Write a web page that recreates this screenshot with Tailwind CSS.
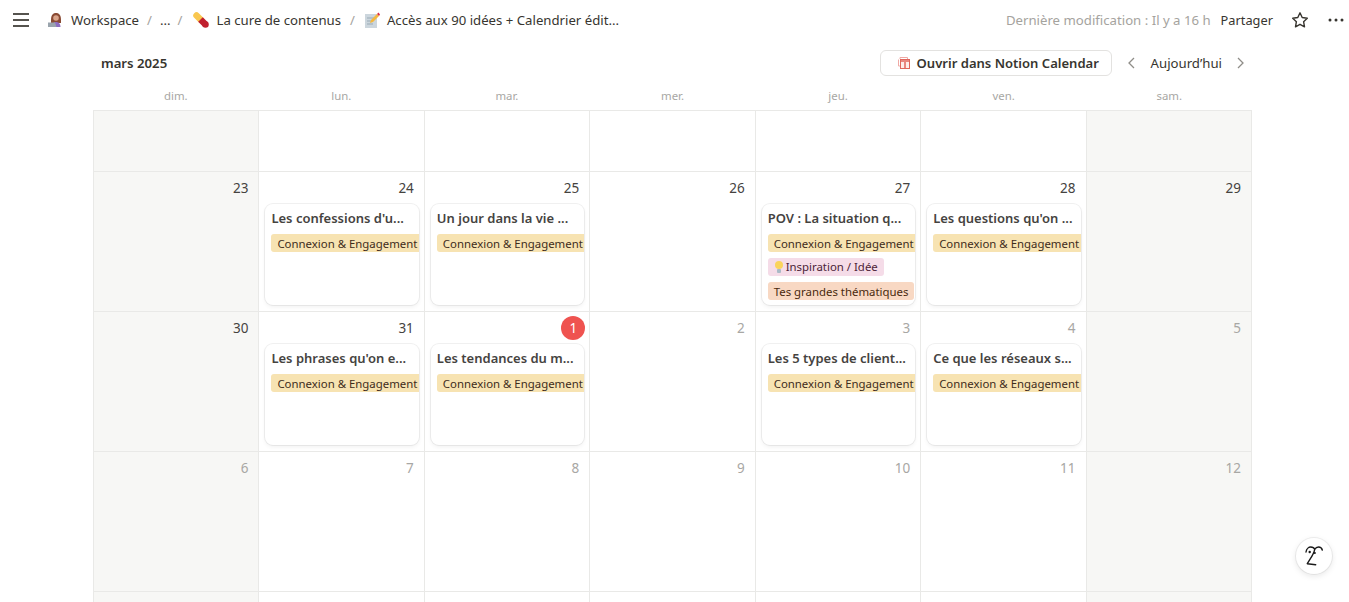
<!DOCTYPE html>
<html lang="fr"><head><meta charset="utf-8"><title>Calendrier</title>
<script src="https://cdn.jsdelivr.net/npm/@tailwindcss/browser@4"></script></head>
<body class="bg-white overflow-hidden">
<div class="relative w-[1349px] h-[602px] overflow-hidden bg-white text-[#37352f] font-['Noto_Sans','Open_Sans',sans-serif] text-[13.2px]">
  <header class="h-[40px] flex items-center pl-[13px] pr-[5px]">
    <svg class="w-[16px] h-[14px] mr-[19px] shrink-0" viewBox="0 0 16 14"><path d="M0 1h16M0 7h16M0 13h16" stroke="#55534e" stroke-width="2"/></svg>
    <svg class="w-[16px] h-[16px] mr-[7px] shrink-0" viewBox="0 0 16 16"><path d="M3 8C3 2.500 5.500 1 8 1s5 1.500 5 7v3H3z" fill="#8a4b34"/><circle cx="8" cy="6" r="2.800" fill="#d9a48a"/><path d="M4 15c0-4 2-5 4-5s4.500 1 4.500 5z" fill="#8e6cc0"/><path d="M0 10.500h7l1.500 4.500H0z" fill="#9aa4ad"/></svg>
    <span class="pt-[2px]">Workspace</span><span class="pt-[2px] ml-[8px] mr-[8px] text-[#a5a39e]">/</span><span class="pt-[2px]">...</span><span class="pt-[2px] ml-[7px] mr-[11px] text-[#a5a39e]">/</span>
    <svg class="w-[16px] h-[16px] mr-[7px] shrink-0" viewBox="0 0 16 16"><path d="M3.500 3.500L8 8" stroke="#f9c74f" stroke-width="6.500" stroke-linecap="round"/><path d="M7.500 7.500L12.500 12.500" stroke="#c0202f" stroke-width="6.500"/><circle cx="12.500" cy="12.500" r="3.250" fill="#c0202f"/></svg>
    <span class="pt-[2px]">La cure de contenus</span><span class="pt-[2px] ml-[9px] mr-[9px] text-[#a5a39e]">/</span>
    <svg class="w-[16px] h-[16px] mr-[7px] shrink-0" viewBox="0 0 16 16"><rect x="1" y="2" width="12" height="14" fill="#ccd6dd"/><path d="M3 6h8M3 9h5M3 12h6" stroke="#99aab5"/><path d="M6 11l1-3 6-6 2 2-6 6z" fill="#f4b83f"/><path d="M13 2l1.500-1.500 1.500 2L15 4z" fill="#dd2e44"/></svg>
    <span class="pt-[2px]">Accès aux 90 idées + Calendrier édit...</span>
    <span class="pt-[2px] ml-auto text-[#a5a39e]">Dernière modification : Il y a 16 h</span>
    <span class="pt-[2px] ml-[10px] text-[12.800px]">Partager</span>
    <svg class="w-[18px] h-[18px] ml-[18px] shrink-0" viewBox="0 0 18 18"><path d="M9 1.800l2.200 4.700 5.100.7-3.700 3.500.9 5.100L9 13.300l-4.500 2.500.9-5.100-3.700-3.500 5.100-.7z" fill="none" stroke="#37352f" stroke-width="1.400" stroke-linejoin="round"/></svg>
    <svg class="w-[16px] h-[4px] ml-[19px] shrink-0" viewBox="0 0 16 4"><circle cx="2" cy="2" r="1.500" fill="#37352f"/><circle cx="8" cy="2" r="1.500" fill="#37352f"/><circle cx="14" cy="2" r="1.500" fill="#37352f"/></svg>
  </header>

  <div class="ml-[93px] w-[1159px]">
    <div class="h-[46px] flex items-center pl-[8px]">
      <span class="pt-[2px] font-semibold">mars 2025</span>
      <button class="ml-auto h-[26px] w-[232px] shrink-0 border border-[#e3e2e0] rounded-[6px] flex items-center pl-[17px] font-semibold whitespace-nowrap">
        <svg class="w-[12px] h-[12px] mr-[7px] shrink-0" viewBox="0 0 12 12"><path d="M2 2V.5H9.500V2M.5 2.500V9H2" fill="none" stroke="#f0aaa5"/><rect x="2.500" y="2.500" width="9" height="9" fill="#fdeceb" stroke="#e0665d"/><path d="M2.500 4h9" stroke="#e0665d" stroke-width="1.500"/><path d="M7 5v6" stroke="#e0665d" stroke-width="1.500"/></svg>
        <span class="pt-[2px] text-[13.050px]">Ouvrir dans Notion Calendar</span>
      </button>
      <svg class="w-[8px] h-[12px] ml-[15px] shrink-0" viewBox="0 0 8 12"><path d="M7 1L2 6l5 5" fill="none" stroke="#8f8d88" stroke-width="1.300"/></svg>
      <span class="pt-[2px] ml-[16px]">Aujourd’hui</span>
      <svg class="w-[8px] h-[12px] ml-[15px] mr-[7px] shrink-0" viewBox="0 0 8 12"><path d="M1 1l5 5-5 5" fill="none" stroke="#8f8d88" stroke-width="1.300"/></svg>
    </div>
    <div class="grid grid-cols-7 h-[24px] pt-[1px] text-[11.400px] text-[#a8a7a4] text-center">
      <div>dim.</div><div>lun.</div><div>mar.</div><div>mer.</div><div>jeu.</div><div>ven.</div><div>sam.</div>
    </div>
    <div class="grid grid-cols-7 grid-rows-[61px_140px_140px_140px_140px] border-l border-t border-[#e9e9e7] text-[13.500px] text-[#45433f]">
      <!-- row 0 -->
      <div class="border-r border-b border-[#e9e9e7] bg-[#f7f7f5]"></div>
      <div class="border-r border-b border-[#e9e9e7]"></div>
      <div class="border-r border-b border-[#e9e9e7]"></div>
      <div class="border-r border-b border-[#e9e9e7]"></div>
      <div class="border-r border-b border-[#e9e9e7]"></div>
      <div class="border-r border-b border-[#e9e9e7]"></div>
      <div class="border-r border-b border-[#e9e9e7] bg-[#f7f7f5]"></div>
      <!-- row 1 -->
      <div class="border-r border-b border-[#e9e9e7] bg-[#f7f7f5] pt-[4px]"><div class="h-[24px] leading-[24px] text-right pr-[10px]">23</div></div>
      <div class="border-r border-b border-[#e9e9e7] pt-[4px]"><div class="h-[24px] leading-[24px] text-right pr-[10px]">24</div>
        <div class="mt-[4px] ml-[6px] mr-[5px] h-[101px] rounded-[8px] bg-white shadow-[0_0_0_1px_rgba(15,15,15,0.06),0_2px_4px_rgba(15,15,15,0.06)] overflow-hidden pl-[6px] pt-[4px]">
          <div class="h-[20px] leading-[20px] text-[13px] font-semibold whitespace-nowrap">Les confessions d'u...</div>
          <div class="mt-[6px] flex flex-col items-start gap-[6px]"><span class="h-[18px] leading-[20px] px-[6px] rounded-[3px] bg-[#f7e3b2] text-[#402c1b] text-[11.400px] whitespace-nowrap">Connexion &amp; Engagement</span></div>
        </div>
      </div>
      <div class="border-r border-b border-[#e9e9e7] pt-[4px]"><div class="h-[24px] leading-[24px] text-right pr-[10px]">25</div>
        <div class="mt-[4px] ml-[6px] mr-[5px] h-[101px] rounded-[8px] bg-white shadow-[0_0_0_1px_rgba(15,15,15,0.06),0_2px_4px_rgba(15,15,15,0.06)] overflow-hidden pl-[6px] pt-[4px]">
          <div class="h-[20px] leading-[20px] text-[13px] font-semibold whitespace-nowrap">Un jour dans la vie ...</div>
          <div class="mt-[6px] flex flex-col items-start gap-[6px]"><span class="h-[18px] leading-[20px] px-[6px] rounded-[3px] bg-[#f7e3b2] text-[#402c1b] text-[11.400px] whitespace-nowrap">Connexion &amp; Engagement</span></div>
        </div>
      </div>
      <div class="border-r border-b border-[#e9e9e7] pt-[4px]"><div class="h-[24px] leading-[24px] text-right pr-[10px]">26</div></div>
      <div class="border-r border-b border-[#e9e9e7] pt-[4px]"><div class="h-[24px] leading-[24px] text-right pr-[10px]">27</div>
        <div class="mt-[4px] ml-[6px] mr-[5px] h-[101px] rounded-[8px] bg-white shadow-[0_0_0_1px_rgba(15,15,15,0.06),0_2px_4px_rgba(15,15,15,0.06)] overflow-hidden pl-[6px] pt-[4px]">
          <div class="h-[20px] leading-[20px] text-[13px] font-semibold whitespace-nowrap">POV : La situation q...</div>
          <div class="mt-[6px] flex flex-col items-start gap-[6px]">
            <span class="h-[18px] leading-[20px] px-[6px] rounded-[3px] bg-[#f7e3b2] text-[#402c1b] text-[11.400px] whitespace-nowrap">Connexion &amp; Engagement</span>
            <span class="h-[18px] leading-[20px] pl-[6px] pr-[6px] rounded-[3px] bg-[#f5dce8] text-[#4c2337] text-[11.400px] whitespace-nowrap flex items-center"><svg class="w-[10px] h-[12px] mr-[2px] shrink-0" viewBox="0 0 10 12"><circle cx="5" cy="4" r="4" fill="#fad45c"/><rect x="3" y="8" width="4" height="4" rx="1" fill="#a9bac6"/></svg>Inspiration / Idée</span>
            <span class="h-[18px] leading-[20px] px-[6px] rounded-[3px] bg-[#f8d8c3] text-[#49290e] text-[11.400px] whitespace-nowrap">Tes grandes thématiques</span>
          </div>
        </div>
      </div>
      <div class="border-r border-b border-[#e9e9e7] pt-[4px]"><div class="h-[24px] leading-[24px] text-right pr-[10px]">28</div>
        <div class="mt-[4px] ml-[6px] mr-[5px] h-[101px] rounded-[8px] bg-white shadow-[0_0_0_1px_rgba(15,15,15,0.06),0_2px_4px_rgba(15,15,15,0.06)] overflow-hidden pl-[6px] pt-[4px]">
          <div class="h-[20px] leading-[20px] text-[13px] font-semibold whitespace-nowrap">Les questions qu'on ...</div>
          <div class="mt-[6px] flex flex-col items-start gap-[6px]"><span class="h-[18px] leading-[20px] px-[6px] rounded-[3px] bg-[#f7e3b2] text-[#402c1b] text-[11.400px] whitespace-nowrap">Connexion &amp; Engagement</span></div>
        </div>
      </div>
      <div class="border-r border-b border-[#e9e9e7] bg-[#f7f7f5] pt-[4px]"><div class="h-[24px] leading-[24px] text-right pr-[10px]">29</div></div>
      <!-- row 2 -->
      <div class="border-r border-b border-[#e9e9e7] bg-[#f7f7f5] pt-[4px]"><div class="h-[24px] leading-[24px] text-right pr-[10px]">30</div></div>
      <div class="border-r border-b border-[#e9e9e7] pt-[4px]"><div class="h-[24px] leading-[24px] text-right pr-[10px]">31</div>
        <div class="mt-[4px] ml-[6px] mr-[5px] h-[101px] rounded-[8px] bg-white shadow-[0_0_0_1px_rgba(15,15,15,0.06),0_2px_4px_rgba(15,15,15,0.06)] overflow-hidden pl-[6px] pt-[4px]">
          <div class="h-[20px] leading-[20px] text-[13px] font-semibold whitespace-nowrap">Les phrases qu'on e...</div>
          <div class="mt-[6px] flex flex-col items-start gap-[6px]"><span class="h-[18px] leading-[20px] px-[6px] rounded-[3px] bg-[#f7e3b2] text-[#402c1b] text-[11.400px] whitespace-nowrap">Connexion &amp; Engagement</span></div>
        </div>
      </div>
      <div class="border-r border-b border-[#e9e9e7] pt-[4px]"><div class="h-[24px] flex justify-end pr-[4px]"><span class="w-[24px] h-[24px] leading-[24px] rounded-full bg-[#ef5350] text-white text-center">1</span></div>
        <div class="mt-[4px] ml-[6px] mr-[5px] h-[101px] rounded-[8px] bg-white shadow-[0_0_0_1px_rgba(15,15,15,0.06),0_2px_4px_rgba(15,15,15,0.06)] overflow-hidden pl-[6px] pt-[4px]">
          <div class="h-[20px] leading-[20px] text-[13px] font-semibold whitespace-nowrap">Les tendances du m...</div>
          <div class="mt-[6px] flex flex-col items-start gap-[6px]"><span class="h-[18px] leading-[20px] px-[6px] rounded-[3px] bg-[#f7e3b2] text-[#402c1b] text-[11.400px] whitespace-nowrap">Connexion &amp; Engagement</span></div>
        </div>
      </div>
      <div class="border-r border-b border-[#e9e9e7] pt-[4px] text-[#a8a7a4]"><div class="h-[24px] leading-[24px] text-right pr-[10px]">2</div></div>
      <div class="border-r border-b border-[#e9e9e7] pt-[4px]"><div class="h-[24px] leading-[24px] text-right pr-[10px] text-[#a8a7a4]">3</div>
        <div class="mt-[4px] ml-[6px] mr-[5px] h-[101px] rounded-[8px] bg-white shadow-[0_0_0_1px_rgba(15,15,15,0.06),0_2px_4px_rgba(15,15,15,0.06)] overflow-hidden pl-[6px] pt-[4px]">
          <div class="h-[20px] leading-[20px] text-[13px] font-semibold whitespace-nowrap">Les 5 types de client...</div>
          <div class="mt-[6px] flex flex-col items-start gap-[6px]"><span class="h-[18px] leading-[20px] px-[6px] rounded-[3px] bg-[#f7e3b2] text-[#402c1b] text-[11.400px] whitespace-nowrap">Connexion &amp; Engagement</span></div>
        </div>
      </div>
      <div class="border-r border-b border-[#e9e9e7] pt-[4px]"><div class="h-[24px] leading-[24px] text-right pr-[10px] text-[#a8a7a4]">4</div>
        <div class="mt-[4px] ml-[6px] mr-[5px] h-[101px] rounded-[8px] bg-white shadow-[0_0_0_1px_rgba(15,15,15,0.06),0_2px_4px_rgba(15,15,15,0.06)] overflow-hidden pl-[6px] pt-[4px]">
          <div class="h-[20px] leading-[20px] text-[13px] font-semibold whitespace-nowrap">Ce que les réseaux s...</div>
          <div class="mt-[6px] flex flex-col items-start gap-[6px]"><span class="h-[18px] leading-[20px] px-[6px] rounded-[3px] bg-[#f7e3b2] text-[#402c1b] text-[11.400px] whitespace-nowrap">Connexion &amp; Engagement</span></div>
        </div>
      </div>
      <div class="border-r border-b border-[#e9e9e7] bg-[#f7f7f5] pt-[4px] text-[#a8a7a4]"><div class="h-[24px] leading-[24px] text-right pr-[10px]">5</div></div>
      <!-- row 3 -->
      <div class="border-r border-b border-[#e9e9e7] bg-[#f7f7f5] pt-[4px] text-[#a8a7a4]"><div class="h-[24px] leading-[24px] text-right pr-[10px]">6</div></div>
      <div class="border-r border-b border-[#e9e9e7] pt-[4px] text-[#a8a7a4]"><div class="h-[24px] leading-[24px] text-right pr-[10px]">7</div></div>
      <div class="border-r border-b border-[#e9e9e7] pt-[4px] text-[#a8a7a4]"><div class="h-[24px] leading-[24px] text-right pr-[10px]">8</div></div>
      <div class="border-r border-b border-[#e9e9e7] pt-[4px] text-[#a8a7a4]"><div class="h-[24px] leading-[24px] text-right pr-[10px]">9</div></div>
      <div class="border-r border-b border-[#e9e9e7] pt-[4px] text-[#a8a7a4]"><div class="h-[24px] leading-[24px] text-right pr-[10px]">10</div></div>
      <div class="border-r border-b border-[#e9e9e7] pt-[4px] text-[#a8a7a4]"><div class="h-[24px] leading-[24px] text-right pr-[10px]">11</div></div>
      <div class="border-r border-b border-[#e9e9e7] bg-[#f7f7f5] pt-[4px] text-[#a8a7a4]"><div class="h-[24px] leading-[24px] text-right pr-[10px]">12</div></div>
      <!-- row 4 -->
      <div class="border-r border-[#e9e9e7] bg-[#f7f7f5]"></div>
      <div class="border-r border-[#e9e9e7]"></div>
      <div class="border-r border-[#e9e9e7]"></div>
      <div class="border-r border-[#e9e9e7]"></div>
      <div class="border-r border-[#e9e9e7]"></div>
      <div class="border-r border-[#e9e9e7]"></div>
      <div class="border-r border-[#e9e9e7] bg-[#f7f7f5]"></div>
    </div>
  </div>

  <button class="absolute left-[1296px] top-[538px] w-[36px] h-[36px] rounded-full bg-white shadow-[0_0_0_1px_rgba(15,15,15,0.06),0_2px_6px_rgba(15,15,15,0.1)] flex items-center justify-center">
    <svg class="w-[18px] h-[20px]" viewBox="0 0 18 20"><path d="M1 6C1.500 2.500 4 1 5.700 1c2 0 3.500 1 4 2.300C10.500 2 12 1 13.500 1c1.800 0 3.300 1 3.800 3M9.700 3.300C9 8 5 13 2.300 17.700L10.700 18.700" fill="none" stroke="#1a1a1a" stroke-width="1.400" stroke-linecap="round" stroke-linejoin="round"/><circle cx="4.700" cy="6" r="1.200" fill="#1a1a1a"/><circle cx="9.800" cy="7" r="1.100" fill="#1a1a1a"/></svg>
  </button>
</div>
</body></html>
